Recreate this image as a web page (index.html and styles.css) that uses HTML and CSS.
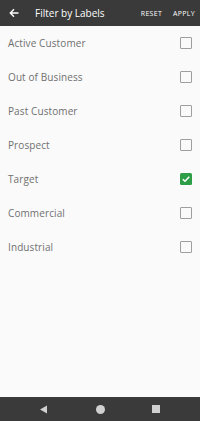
FILE: index.html
```html
<!DOCTYPE html>
<html>
<head>
<meta charset="utf-8">
<link rel="stylesheet" href="styles.css">
</head>
<body>
<div class="screen">
  <header class="appbar">
    <svg class="back" width="10" height="10" viewBox="0 0 10 10"><path d="M9.5 5H1.5M5 1.3L1.3 5 5 8.7" fill="none" stroke="#fff" stroke-width="1.4"/></svg>
    <span class="title">Filter by Labels</span>
    <span class="action">RESET</span>
    <span class="action">APPLY</span>
  </header>
  <ul class="list">
    <li class="row"><span>Active Customer</span><span class="box"></span></li>
    <li class="row"><span>Out of Business</span><span class="box"></span></li>
    <li class="row"><span>Past Customer</span><span class="box"></span></li>
    <li class="row"><span>Prospect</span><span class="box"></span></li>
    <li class="row"><span>Target</span><span class="box checked"><svg width="10" height="10" viewBox="0 0 10 10"><path d="M1.8 5.2L4 7.3 8.3 2.8" fill="none" stroke="#fff" stroke-width="1.5"/></svg></span></li>
    <li class="row"><span>Commercial</span><span class="box"></span></li>
    <li class="row"><span>Industrial</span><span class="box"></span></li>
  </ul>
  <nav class="navbar">
    <svg width="9" height="9" viewBox="0 0 9 9"><path d="M8 0.5V8.5L1 4.5Z" fill="#d0d0d0"/></svg>
    <span class="dot"></span>
    <span class="sq"></span>
  </nav>
</div>
</body>
</html>
```
FILE: styles.css
```css
html, body { margin: 0; padding: 0; }
body { font-family: "Open Sans", "Liberation Sans", sans-serif; background: #fafafa; }
.screen { width: 200px; height: 421px; display: flex; flex-direction: column; background: #fafafa; }
.appbar { height: 26px; background: #3a3a3a; display: flex; align-items: center; color: #fff; box-sizing: border-box; padding: 0 5px 0 9px; flex: none; }
.back { flex: none; }
.title { font-size: 10px; font-weight: 500; margin-left: 16px; flex: 1; }
.action { font-size: 7px; font-weight: 400; margin-left: 11px; letter-spacing: 0.3px; }
.list { list-style: none; margin: 0; padding: 0; flex: 1; }
.row { height: 34px; display: flex; align-items: center; justify-content: space-between; padding: 0 8px 0 8px; font-size: 10px; color: #707070; letter-spacing: 0.1px; }
.box { width: 12px; height: 12px; border: 1.4px solid #9e9e9e; border-radius: 1px; box-sizing: border-box; display: flex; align-items: center; justify-content: center; }
.box.checked { background: #2e9d47; border: none; border-radius: 1.5px; }
.navbar { height: 24px; background: #3a3a3a; display: flex; align-items: center; justify-content: space-between; padding: 0 40px 0 39px; flex: none; }
.dot { width: 9px; height: 9px; border-radius: 50%; background: #d0d0d0; }
.sq { width: 8px; height: 8px; background: #d0d0d0; }
```
